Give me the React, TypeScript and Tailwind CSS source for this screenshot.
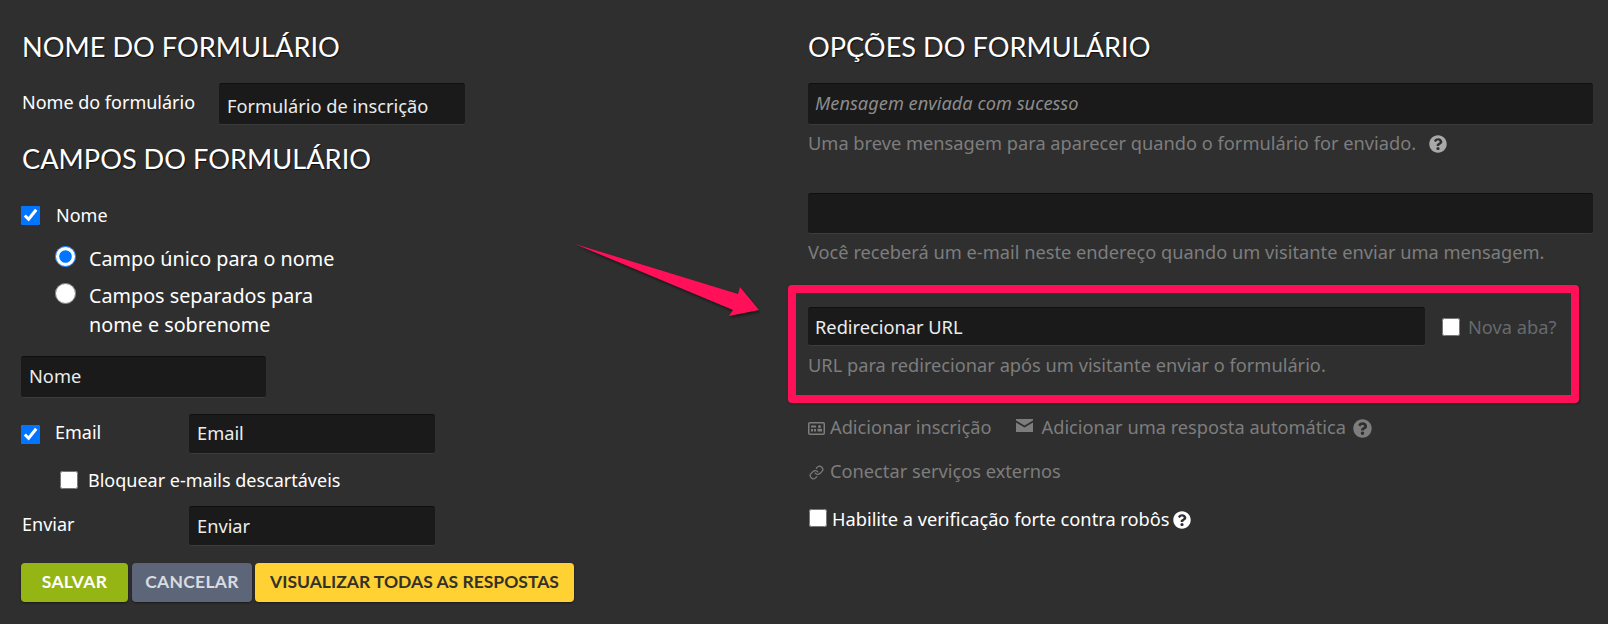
import { FaQuestionCircle } from 'react-icons/fa';
import { Link } from 'lucide-react';

const inputClass =
  'h-full w-full rounded-[3px] border-t border-t-[#0f0f0f] border-b border-b-[#3c3c3c] bg-[#1a1a1a] px-2 text-[18.24px] text-[#ececec] outline-none';
const headingClass =
  "font-['Lato',sans-serif] text-[27.2px] leading-[32px] text-white [text-shadow:1px_1px_1px_#111]";
const btnClass =
  "flex h-[39px] items-center justify-center rounded-[4px] font-['Lato',sans-serif] text-[17.5px] font-bold uppercase shadow-[0_1px_2px_#1a1a1a]";

function Arrow() {
  return (
    <svg className="absolute top-[240px] left-[570px]" width="200" height="85" viewBox="570 240 200 85">
      <polygon
        points="575,244 738,294 740,287 759,310 729,316 733,310"
        fill="#ff1058"
        className="drop-shadow-[1px_2px_1px_#1a1a1a]"
      />
    </svg>
  );
}

function CardIcon() {
  return (
    <svg width="17" height="13" viewBox="0 0 17 13" fill="currentColor" className="shrink-0">
      <rect x="0.75" y="0.75" width="15.5" height="11.5" rx="1" fill="none" stroke="currentColor" strokeWidth="1.5" />
      <rect x="3" y="3.5" width="5" height="2" />
      <rect x="3" y="7" width="2" height="2.5" />
      <rect x="6" y="7" width="2" height="2.5" />
      <circle cx="11.5" cy="4.6" r="1.5" />
      <rect x="9.5" y="6.8" width="4.5" height="2.7" />
    </svg>
  );
}

function MailIcon() {
  return (
    <svg width="17" height="13" viewBox="0 0 17 13" fill="currentColor" className="shrink-0">
      <path d="M0 0h17v1.4L8.5 6.4 0 1.4z" />
      <path d="M0 3.6l8.5 5 8.5-5V13H0z" />
    </svg>
  );
}

export default function App() {
  return (
    <div className="relative flex h-[624px] w-full overflow-hidden bg-[#2f2f2f] font-['Noto_Sans',sans-serif] text-[18px] text-white">
      <div className="w-[808px] shrink-0 pt-[31px] pl-[22px]">
        <h2 className={headingClass}>NOME DO FORMULÁRIO</h2>
        <div className="mt-[20px] flex h-[42px] items-center">
          <span className="w-[197px] pb-1">Nome do formulário</span>
          <div className="h-full w-[246px]">
            <input className={`${inputClass} pt-[3px]`} defaultValue="Formulário de inscrição" />
          </div>
        </div>
        <h2 className={`${headingClass} mt-[18px]`}>CAMPOS DO FORMULÁRIO</h2>

        <div className="mt-[31px] flex h-[19px] items-center">
          <input type="checkbox" defaultChecked className="-ml-px h-[19px] w-[19px]" />
          <span className="ml-[16px]">Nome</span>
        </div>

        <div className="mt-[20px] flex h-[22px] items-center pl-[33px]">
          <input type="radio" defaultChecked className="h-[21px] w-[21px]" />
          <span className="ml-[13px] pt-[6px] text-[19.75px]">Campo único para o nome</span>
        </div>
        <div className="mt-[16px] flex items-start pl-[33px]">
          <input type="radio" className="h-[21px] w-[21px]" />
          <span className="-mt-[2px] mb-[2px] ml-[13px] text-[19.75px] leading-[29px]">
            Campos separados para
            <br />
            nome e sobrenome
          </span>
        </div>

        <div className="mt-[15px] h-[42px] w-[245px] -translate-x-px">
          <input className={`${inputClass} pb-[2px]`} defaultValue="Nome" />
        </div>

        <div className="mt-[16px] flex h-[40px] items-center">
          <input type="checkbox" defaultChecked className="-ml-px h-[19px] w-[19px]" />
          <span className="ml-[15px] w-[134px] pb-1">Email</span>
          <div className="h-full w-[246px]">
            <input className={`${inputClass} pb-[2px]`} defaultValue="Email" />
          </div>
        </div>

        <div className="mt-[16px] flex h-[19px] items-center pl-[38px]">
          <input type="checkbox" className="h-[18px] w-[18px]" />
          <span className="ml-[10px] pt-[2px]">Bloquear e-mails descartáveis</span>
        </div>

        <div className="mt-[17px] flex h-[40px] items-center">
          <span className="w-[167px] pb-1">Enviar</span>
          <div className="h-full w-[246px]">
            <input className={inputClass} defaultValue="Enviar" />
          </div>
        </div>

        <div className="mt-[17px] -ml-px flex">
          <div className={`${btnClass} w-[107px] bg-[#95b514] tracking-[0.3px] text-white`}>Salvar</div>
          <div className={`${btnClass} ml-[4px] w-[120px] bg-[#5d6679] tracking-[0.3px] text-[#d8dbe0]`}>Cancelar</div>
          <div className={`${btnClass} ml-[3px] w-[319px] bg-[#ffd133] text-[#33312a]`}>
            Visualizar todas as respostas
          </div>
        </div>
      </div>

      <div className="w-[785px] shrink-0 pt-[31px] text-[18.24px]">
        <h2 className={headingClass}>OPÇÕES DO FORMULÁRIO</h2>
        <div className="mt-[20px] h-[42px]">
          <input
            className={`${inputClass} pb-[2px] pl-[7px] placeholder:text-[#8c8c8c] placeholder:italic`}
            placeholder="Mensagem enviada com sucesso"
          />
        </div>
        <div className="mt-[7px] flex h-[24px] items-center text-[#7d7d7d]">
          <span>Uma breve mensagem para aparecer quando o formulário for enviado.</span>
          <FaQuestionCircle className="ml-[13px] text-[18px] text-[#a9a9a9]" />
        </div>
        <div className="mt-[37px] h-[41px]">
          <input className={inputClass} />
        </div>
        <div className="mt-[6px] h-[24px] leading-[24px] text-[#7d7d7d]">
          Você receberá um e-mail neste endereço quando um visitante enviar uma mensagem.
        </div>

        <div className="mt-[21px] -ml-[20px] h-[118px] w-[791px] rounded-[4px] border-[8px] border-[#ff1058] pt-[14px] pl-[12px] shadow-[1px_1px_2px_#1f1f1f]">
          <div className="flex h-[39px] items-center">
            <div className="h-full w-[617px]">
              <input className={`${inputClass} pl-[7px]`} defaultValue="Redirecionar URL" />
            </div>
            <input type="checkbox" className="ml-[17px] h-[18px] w-[18px]" />
            <span className="ml-[8px] pt-[2px] text-[#666a6e]">Nova aba?</span>
          </div>
          <div className="mt-[7px] h-[24px] leading-[24px] text-[#7d7d7d]">
            URL para redirecionar após um visitante enviar o formulário.
          </div>
        </div>

        <div className="mt-[13px] flex h-[24px] items-center text-[#7d7d7d]">
          <CardIcon />
          <span className="ml-[5px]">Adicionar inscrição</span>
          <div className="mb-[5px] ml-[24px]">
            <MailIcon />
          </div>
          <span className="ml-[9px]">Adicionar uma resposta automática</span>
          <FaQuestionCircle className="ml-[7px] text-[19px]" />
        </div>
        <div className="mt-[20px] flex h-[24px] items-center text-[#7d7d7d]">
          <Link size={15} strokeWidth={2} className="ml-px shrink-0" />
          <span className="ml-[6px]">Conectar serviços externos</span>
        </div>
        <div className="mt-[24px] flex h-[24px] items-center">
          <input type="checkbox" className="mb-[5px] ml-px h-[18px] w-[18px]" />
          <span className="ml-[5px]">Habilite a verificação forte contra robôs</span>
          <FaQuestionCircle className="ml-[3px] text-[18px]" />
        </div>
      </div>

      <Arrow />
    </div>
  );
}
